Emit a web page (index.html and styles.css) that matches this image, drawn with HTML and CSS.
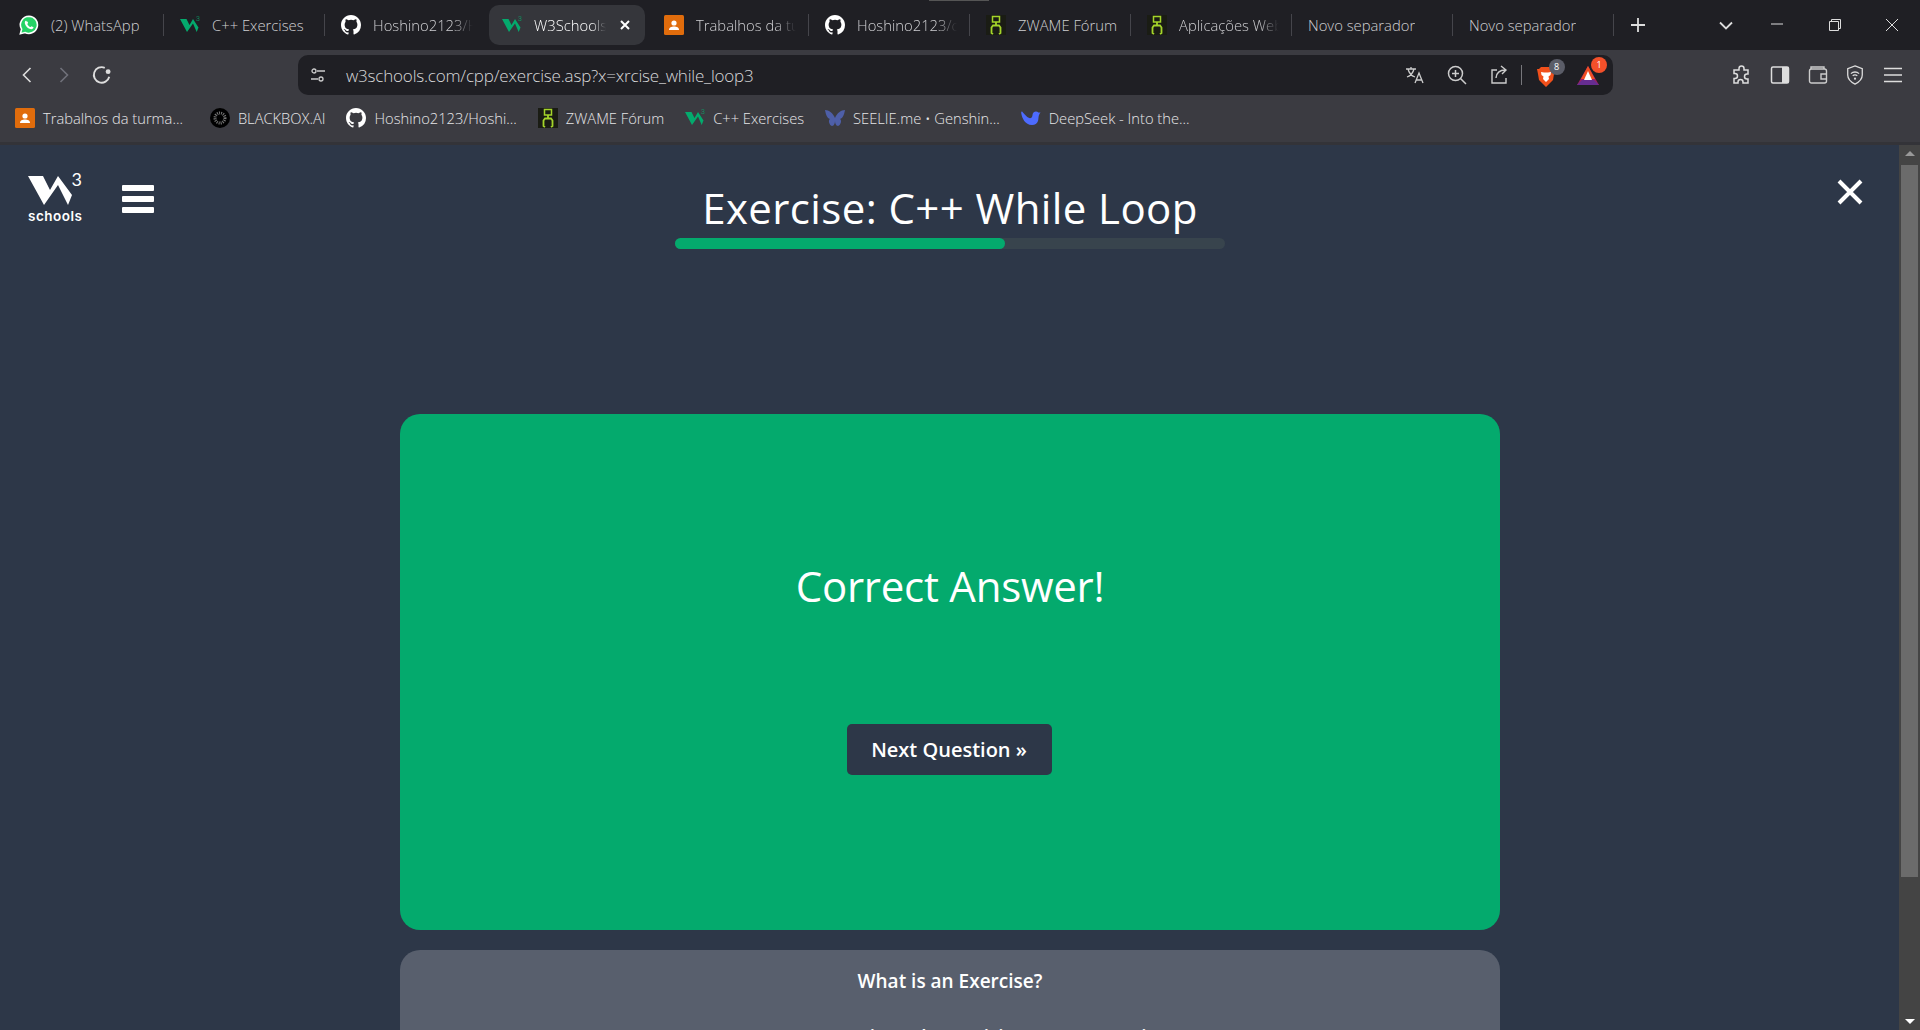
FILE: index.html
```html
<!DOCTYPE html>
<html>
<head>
  <title>Exercise: C++ While Loop</title>
  <link rel="stylesheet" href="styles.css">
</head>
<body>
  <svg class="icon-defs" width="0" height="0">
    <defs>
      <symbol id="w3" viewBox="0 0 20 20">
        <path fill="#04aa6d" d="M0 4h6.500l3 6 3.500-6 5.500 8.500-1.800 4.500-3.700-8.500-6 8.500z"/>
        <text x="16" y="6" font-size="7" font-family="Roboto, sans-serif" fill="#04aa6d">3</text>
      </symbol>
      <symbol id="github" viewBox="0 0 16 16">
        <path fill="#fff" d="M8 0C3.58 0 0 3.58 0 8c0 3.54 2.29 6.53 5.47 7.59.4.07.55-.17.55-.38v-1.34c-2.23.48-2.69-1.08-2.69-1.08-.36-.92-.89-1.17-.89-1.17-.73-.5.05-.49.05-.49.8.06 1.23.83 1.23.83.71 1.22 1.87.87 2.33.66.07-.52.28-.87.5-1.07-1.78-.2-3.64-.89-3.64-3.95 0-.87.31-1.59.82-2.15-.08-.2-.36-1.02.08-2.12 0 0 .67-.21 2.2.82a7.6 7.6 0 0 1 4 0c1.53-1.04 2.2-.82 2.2-.82.44 1.1.16 1.92.08 2.12.51.56.82 1.27.82 2.15 0 3.07-1.87 3.75-3.65 3.95.29.25.54.73.54 1.48v2.2c0 .21.15.46.55.38A8 8 0 0 0 16 8c0-4.42-3.58-8-8-8z"/>
      </symbol>
      <symbol id="zwame" viewBox="0 0 20 20">
        <rect width="20" height="20" fill="#1a1c14"/>
        <rect x="6.500" y="1.500" width="7" height="5.500" fill="none" stroke="#a4d42a" stroke-width="1.500"/>
        <path fill="none" stroke="#a4d42a" stroke-width="1.800" d="M10 7v3M7 19l-1.500-1v-5.500l1.500-2h6l1.500 2V18L13 19"/>
      </symbol>
      <symbol id="classroom" viewBox="0 0 20 20">
        <rect width="20" height="20" rx="1.500" fill="#e06c0c"/>
        <circle cx="10" cy="8" r="2.600" fill="#fff"/>
        <path fill="#fff" d="M5 15c0-2.500 2.400-3.400 5-3.400s5 .9 5 3.400z"/>
      </symbol>
    </defs>
  </svg>

  <div class="browser">
    <div class="tabstrip">
      <div class="drag-mark"></div>
      <div class="tab">
        <svg class="fav" viewBox="0 0 20 20"><path fill="#25d366" stroke="#fff" stroke-width="1.600" d="M10 1.200a8.600 8.600 0 0 0-7.400 13L1.400 18.700l4.600-1.200A8.600 8.600 0 1 0 10 1.200z"/><path fill="#fff" d="M7.200 5.600c-.5 0-1.400.8-1.400 2.200 0 2.600 3.400 6.500 6.500 6.500 1.400 0 2.300-1 2.300-1.700 0-.4-1.800-1.400-2.200-1.400-.3 0-.7.9-1.100.9-.9 0-3-2.100-3-3 0-.4.800-.8.800-1.100 0-.4-.8-2.400-1.900-1.600z"/></svg>
        <span class="tab-title">(2) WhatsApp</span>
      </div>
      <div class="tab">
        <svg class="fav"><use href="#w3"/></svg>
        <span class="tab-title">C++ Exercises</span>
      </div>
      <div class="tab">
        <svg class="fav"><use href="#github"/></svg>
        <span class="tab-title fade">Hoshino2123/Hoshino</span>
      </div>
      <div class="tab active">
        <svg class="fav"><use href="#w3"/></svg>
        <span class="tab-title fade">W3Schools Online</span>
        <svg class="tab-close" viewBox="0 0 12 12"><path stroke="#fff" stroke-width="2" d="M2 2l8 8M10 2l-8 8"/></svg>
      </div>
      <div class="tab">
        <svg class="fav"><use href="#classroom"/></svg>
        <span class="tab-title fade">Trabalhos da turma</span>
      </div>
      <div class="tab">
        <svg class="fav"><use href="#github"/></svg>
        <span class="tab-title fade">Hoshino2123/cpp-course</span>
      </div>
      <div class="tab">
        <svg class="fav"><use href="#zwame"/></svg>
        <span class="tab-title">ZWAME Fórum</span>
      </div>
      <div class="tab">
        <svg class="fav"><use href="#zwame"/></svg>
        <span class="tab-title fade">Aplicações Web e mais</span>
      </div>
      <div class="tab"><span class="tab-title">Novo separador</span></div>
      <div class="tab"><span class="tab-title">Novo separador</span></div>
      <svg class="new-tab" viewBox="0 0 14 14"><path stroke="#ddd" stroke-width="1.800" d="M7 0v14M0 7h14"/></svg>
      <svg class="tab-list" viewBox="0 0 14 9"><path fill="none" stroke="#ddd" stroke-width="1.800" d="M1 1.500l6 6 6-6"/></svg>
      <div class="win-buttons">
        <svg viewBox="0 0 14 14"><path stroke="#ddd" d="M1 6h12"/></svg>
        <svg viewBox="0 0 14 14"><path fill="none" stroke="#ddd" d="M1.500 3.500h9v9h-9zM3.500 3.500v-2h9v9h-2"/></svg>
        <svg viewBox="0 0 14 14"><path stroke="#ddd" d="M1 1l12 12M13 1L1 13"/></svg>
      </div>
    </div>

    <div class="toolbar">
      <div class="nav-buttons">
        <svg viewBox="0 0 10 16"><path fill="none" stroke="#ddd" stroke-width="1.600" d="M8.500 1L1.500 8l7 7"/></svg>
        <svg viewBox="0 0 10 16"><path fill="none" stroke="#70717a" stroke-width="1.600" d="M1.500 1l7 7-7 7"/></svg>
        <svg viewBox="0 0 18 18"><path fill="none" stroke="#ddd" stroke-width="1.700" d="M15.500 10.500A7 7 0 1 1 11.500 2.500"/><circle cx="14.500" cy="6" r="2.200" fill="#ddd"/></svg>
      </div>
      <div class="address">
        <svg class="tune" viewBox="0 0 16 16"><g fill="none" stroke="#ccc" stroke-width="1.300"><circle cx="4" cy="4" r="2"/><path d="M7 4h8M1 12h7"/><circle cx="11" cy="12" r="2"/></g></svg>
        <span class="url">w3schools.com/cpp/exercise.asp?x=xrcise_while_loop3</span>
        <div class="address-icons">
          <svg viewBox="0 0 20 20"><g fill="none" stroke="#ccc" stroke-width="1.300"><path d="M1 4h10M6 2v2M3 4c1 4 4 7 7 8M9 4c-1 4-4 7-7 8M10 18l4-10 4 10M11.500 15h5"/></g></svg>
          <svg viewBox="0 0 20 20"><g fill="none" stroke="#ccc" stroke-width="1.500"><circle cx="8.500" cy="8.500" r="7"/><path d="M13.500 13.500l5.500 5.500M8.500 5v7M5 8.500h7"/></g></svg>
          <svg viewBox="0 0 20 20"><g fill="none" stroke="#ccc" stroke-width="1.400"><path d="M7 5H2v13h14v-5"/><path d="M6 13c0-5 4-8 9-8M11 1l5 4-4 4"/></g></svg>
          <span class="address-sep"></span>
          <div class="shield">
            <svg viewBox="0 0 18 20"><path fill="#f1501b" d="M4 0h10l2 2h2l-1 5-1 6-7 7-7-7-1-6-1-5h2z"/><path fill="#fff" d="M4 5l3 .5h4l3-.5-.5 3-2 1.500.5 2.500L9 15l-3-3 .5-2.500-2-1.500z"/></svg>
            <span class="badge gray">8</span>
          </div>
          <div class="shield bat">
            <svg viewBox="0 0 22 20"><path fill="#9e1f63" d="M11 1L0 20h22z"/><path fill="#f04e23" d="M11 1L4 14h14z"/><path fill="#662d91" d="M0 20l5-5h12l5 5z"/><path fill="#fff" d="M11 6l-4 9h8z"/></svg>
            <span class="badge orange">1</span>
          </div>
        </div>
      </div>
      <div class="toolbar-icons">
        <svg viewBox="0 0 20 20"><path fill="none" stroke="#ddd" stroke-width="1.500" d="M7 3.500a2.500 2.500 0 0 1 5 0V5h4v4h-1a2.500 2.500 0 0 0 0 5h1v4h-5v-1a2.500 2.500 0 0 0-5 0v1H2v-4.500h1a2.500 2.500 0 0 0 0-5H2V5h5z"/></svg>
        <svg viewBox="0 0 20 20"><rect x="1.500" y="2" width="17" height="16" rx="1.500" fill="none" stroke="#ddd" stroke-width="1.500"/><rect x="12" y="2" width="6.500" height="16" fill="#ddd"/></svg>
        <svg viewBox="0 0 20 20"><g fill="none" stroke="#ccc" stroke-width="1.400"><rect x="1.500" y="4" width="17" height="14" rx="2"/><path d="M3 4V2h13v2M19 9h-6v5h6"/></g></svg>
        <svg viewBox="0 0 20 22"><g fill="none" stroke="#ddd" stroke-width="1.400"><path d="M10 1l8 3v7c0 5-4 8-8 10-4-2-8-5-8-10V4z"/><path d="M5.500 9.500a6.500 6.500 0 0 1 9 0M7.500 12a3.500 3.500 0 0 1 5 0"/></g><circle cx="10" cy="15" r="1.200" fill="#ddd"/></svg>
        <svg viewBox="0 0 20 16"><path stroke="#ddd" stroke-width="1.500" d="M1 1.500h18M1 8h18M1 14.500h18"/></svg>
      </div>
    </div>

    <div class="bookmarks">
      <div class="bookmark"><svg class="fav"><use href="#classroom"/></svg><span>Trabalhos da turma...</span></div>
      <div class="bookmark"><svg class="fav" viewBox="0 0 20 20"><circle cx="10" cy="10" r="10" fill="#000"/><circle cx="10" cy="10" r="5" fill="none" stroke="#777" stroke-width="3" stroke-dasharray="1 1"/></svg><span>BLACKBOX.AI</span></div>
      <div class="bookmark"><svg class="fav"><use href="#github"/></svg><span>Hoshino2123/Hoshi...</span></div>
      <div class="bookmark"><svg class="fav"><use href="#zwame"/></svg><span>ZWAME Fórum</span></div>
      <div class="bookmark"><svg class="fav"><use href="#w3"/></svg><span>C++ Exercises</span></div>
      <div class="bookmark"><svg class="fav" viewBox="0 0 20 18"><path fill="#4e5fa8" d="M0 1c4 0 8 3 10 8 2-5 6-8 10-8-1 5-2 8-5 9 2 1 1 6-2 7-2 0-3-3-3-5 0 2-1 5-3 5-3-1-4-6-2-7C2 9 1 6 0 1z"/></svg><span>SEELIE.me • Genshin...</span></div>
      <div class="bookmark"><svg class="fav" viewBox="0 0 20 16"><path fill="#4d6bfe" d="M19.500 2c-.8.400-1.200.800-2 .6C16 1 14 1 12.500 2.500 11 4 12 7 10 8 7.500 9 4 5 1.500 2 .5 1 0 2 .3 3.500 1 8 4 15 11 15c3 0 5-1.500 6-4 .6-2 .3-4 1-6 .5-.8 1-2 1.500-3z"/></svg><span>DeepSeek - Into the...</span></div>
    </div>
  </div>

  <div class="viewport">
    <div class="page">
      <header class="topbar">
        <div class="logo">
          <svg class="logo-w" viewBox="0 0 45 30"><path fill="#fff" d="M0 0H15L22 14L30 0L44 19L40 29L30 9L16 29Z"/></svg>
          <span class="logo-three">3</span>
          <span class="logo-schools">schools</span>
        </div>
        <div class="burger"><span></span><span></span><span></span></div>
        <div class="heading">
          <h1>Exercise: C++ While Loop</h1>
          <div class="progress"><div class="progress-fill"></div></div>
        </div>
        <svg class="close-x" viewBox="0 0 26 26"><path stroke="#fff" stroke-width="4" d="M2 2l22 22M24 2L2 24"/></svg>
      </header>

      <section class="result">
        <h2>Correct Answer!</h2>
        <button class="next">Next Question »</button>
      </section>

      <section class="about">
        <h3>What is an Exercise?</h3>
        <p>To try more C++ Exercises please visit our C++ Exercises page.</p>
      </section>
    </div>

    <div class="scrollbar">
      <div class="arrow up"></div>
      <div class="thumb"></div>
      <div class="arrow down"></div>
    </div>
  </div>
</body>
</html>
```

FILE: styles.css
```css
* {
  box-sizing: border-box;
}

html, body {
  height: 100%;
}

body {
  margin: 0;
  overflow: hidden;
  display: flex;
  flex-direction: column;
  font-family: "Open Sans", "Noto Sans", sans-serif;
  background-color: #2d3748;
  color: #fff;
}

.icon-defs {
  position: absolute;
}

/* browser chrome */

.tabstrip {
  height: 50px;
  padding-left: 3px;
  display: flex;
  align-items: center;
  background-color: #1f1f24;
  position: relative;
}

.drag-mark {
  position: absolute;
  left: 929px;
  top: 0;
  width: 60px;
  height: 1px;
  background-color: #555;
}

.tab {
  width: 161px;
  height: 40px;
  flex: none;
  padding-left: 16px;
  display: flex;
  align-items: center;
  gap: 12px;
  position: relative;
  font-size: 14.8px;
  font-weight: 300;
  color: #cfcfd2;
}

.tab::after {
  content: "";
  position: absolute;
  right: 0;
  top: 9px;
  height: 22px;
  width: 1px;
  background-color: #45454b;
}

.tab:nth-child(4)::after,
.tab.active::after {
  display: none;
}

.tab.active {
  margin: 0 3px;
  width: 156px;
  padding-left: 13px;
  background-color: #35363b;
  border-radius: 10px;
  color: #fff;
}

.fav {
  width: 20px;
  height: 20px;
  flex: none;
}

.tab-title {
  white-space: nowrap;
  overflow: hidden;
}

.fade {
  width: 100px;
  -webkit-mask-image: linear-gradient(to right, #000 80%, transparent);
  mask-image: linear-gradient(to right, #000 80%, transparent);
}

.active .fade {
  width: 72px;
}

.tab-close {
  width: 12px;
  height: 12px;
  flex: none;
  margin-left: 1px;
}

.new-tab {
  width: 14px;
  height: 14px;
  margin-left: 17px;
}

.tab-list {
  width: 14px;
  height: 9px;
  margin-left: 74px;
}

.win-buttons {
  margin-left: 37px;
  display: flex;
  gap: 43.5px;
}

.win-buttons svg {
  width: 14px;
  height: 14px;
}

.toolbar {
  height: 50px;
  padding-top: 5px;
  display: flex;
  background-color: #3b3b41;
}

.nav-buttons {
  width: 298px;
  height: 40px;
  padding-left: 22px;
  display: flex;
  align-items: center;
  gap: 27px;
}

.nav-buttons svg {
  width: 10px;
  height: 16px;
}

.nav-buttons svg:last-child {
  width: 20px;
  height: 20px;
  margin-left: -4px;
}

.address {
  width: 1315px;
  height: 40px;
  padding: 0 14px 0 12px;
  display: flex;
  align-items: center;
  background-color: #1f1f24;
  border-radius: 10px;
}

.tune {
  width: 16px;
  height: 16px;
}

.url {
  margin-left: 20px;
  font-size: 17px;
  font-weight: 300;
  letter-spacing: -0.19px;
  color: #d8d8da;
}

.address-icons {
  margin-left: auto;
  display: flex;
  align-items: center;
  gap: 22.5px;
}

.address-icons > svg {
  width: 20px;
  height: 20px;
}

.address-sep {
  width: 1px;
  height: 20px;
  margin: 0 -7.5px 0 -11.5px;
  background-color: #77777c;
}

.shield {
  position: relative;
  width: 18px;
  height: 20px;
  margin-top: 4px;
}

.shield svg {
  width: 100%;
  height: 100%;
  display: block;
}

.bat {
  width: 22px;
  height: 20px;
  margin-top: -1px;
}

.badge {
  position: absolute;
  right: -10px;
  top: -8px;
  width: 16px;
  height: 16px;
  border-radius: 50%;
  font-size: 9px;
  line-height: 16px;
  text-align: center;
  color: #fff;
}

.badge.gray {
  background-color: #5b5d68;
}

.badge.orange {
  right: -8px;
  background-color: #f4502a;
}

.toolbar-icons {
  height: 40px;
  margin-left: 119px;
  display: flex;
  align-items: center;
  gap: 17.8px;
}

.toolbar-icons svg {
  width: 20px;
  height: 20px;
}

.bookmarks {
  height: 45px;
  padding: 0 0 6px 15px;
  display: flex;
  align-items: center;
  gap: 21px;
  background-color: #3b3b41;
  border-bottom: 3px solid #333338;
  font-size: 14.7px;
  font-weight: 300;
  color: #e6e6e8;
}

.bookmark {
  display: flex;
  align-items: center;
  gap: 8px;
  white-space: nowrap;
}

.bookmark:first-child {
  margin-right: 6px;
}

/* page */

.viewport {
  flex: 1;
  display: flex;
  min-height: 0;
}

.page {
  flex: 1;
  padding: 0 399px 0 400px;
  overflow: hidden;
  position: relative;
}

.topbar {
  height: 269px;
}

.logo {
  position: absolute;
  left: 28px;
  top: 29px;
  width: 54px;
  height: 50px;
}

.logo-w {
  position: absolute;
  left: 0;
  top: 2px;
  width: 45px;
  height: 30px;
}

.logo-three {
  position: absolute;
  right: 0;
  top: -6px;
  font-family: "Lato", sans-serif;
  font-size: 18px;
}

.logo-schools {
  position: absolute;
  left: 0;
  bottom: 0;
  font-family: "Inter", sans-serif;
  font-size: 13.5px;
  font-weight: 600;
  letter-spacing: 0.5px;
}

.burger {
  position: absolute;
  left: 122px;
  top: 40px;
  width: 32px;
  display: flex;
  flex-direction: column;
  gap: 5px;
}

.burger span {
  height: 6px;
  background-color: #fff;
  border-radius: 1px;
}

.heading {
  position: absolute;
  left: 675px;
  top: 34px;
  width: 550px;
}

h1 {
  margin: 0;
  height: 58px;
  font-size: 42px;
  font-weight: 400;
  letter-spacing: 0.4px;
  line-height: 58px;
  text-align: center;
  white-space: nowrap;
}

.progress {
  height: 11px;
  margin-top: 1px;
  background-color: #38444d;
  border-radius: 6px;
}

.progress-fill {
  width: 60%;
  height: 100%;
  background-color: #04aa6d;
  border-radius: 6px;
}

.close-x {
  position: absolute;
  left: 1837px;
  top: 34px;
  width: 26px;
  height: 26px;
}

.result {
  height: 516px;
  padding-top: 143px;
  display: flex;
  flex-direction: column;
  align-items: center;
  background-color: #04aa6d;
  border-radius: 20px;
}

h2 {
  margin: 0;
  font-size: 42px;
  font-weight: 400;
  letter-spacing: -0.25px;
  line-height: 58px;
}

.next {
  width: 205px;
  height: 51px;
  margin: 109px 2px 0 0;
  border: none;
  border-radius: 5px;
  background-color: #2d3748;
  color: #fff;
  font-family: inherit;
  font-size: 20px;
  font-weight: 600;
}

.about {
  height: 200px;
  margin-top: 20px;
  padding-top: 17px;
  background-color: #585f6d;
  border-radius: 20px;
  text-align: center;
}

h3 {
  margin: 0;
  font-size: 19px;
  font-weight: 600;
  line-height: 28px;
}

.about p {
  margin: 29px 0 0;
  font-size: 19px;
  font-weight: 600;
}

.scrollbar {
  width: 21px;
  padding: 0 2px;
  display: flex;
  flex-direction: column;
  align-items: center;
  background-color: #444;
  position: relative;
}

.arrow {
  width: 0;
  height: 0;
  position: absolute;
  border-left: 5px solid transparent;
  border-right: 5px solid transparent;
}

.arrow.up {
  top: 6px;
  border-bottom: 5px solid #999;
}

.arrow.down {
  bottom: 6px;
  border-top: 5px solid #fff;
}

.thumb {
  width: 17px;
  height: 712px;
  margin-top: 20px;
  background-color: #6b6b6b;
}
```
